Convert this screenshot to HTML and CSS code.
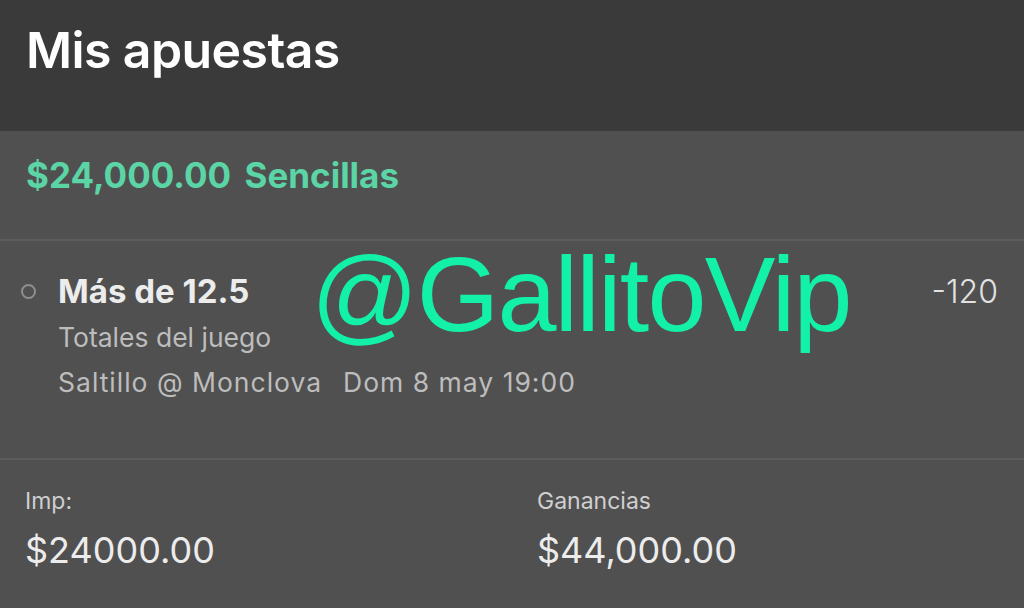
FILE: index.html
```html
<!DOCTYPE html>
<html lang="es">
<head>
<meta charset="utf-8">
<title>Mis apuestas</title>
<link rel="stylesheet" href="styles.css">
</head>
<body>
  <header class="topbar">
    <h1 class="title">Mis apuestas</h1>
  </header>
  <main class="bet">
    <section class="bet-head">
      <span class="bet-sum">$24,000.00 Sencillas</span>
    </section>
    <section class="selection">
      <span class="dot"></span>
      <div class="sel-body">
        <div class="sel-row">
          <span class="sel-name">Más de 12.5</span>
          <span class="sel-odds">-120</span>
        </div>
        <div class="sel-market">Totales del juego</div>
        <div class="sel-event"><span>Saltillo @ Monclova</span><span>Dom 8 may 19:00</span></div>
      </div>
      <div class="tag">@GallitoVip</div>
    </section>
    <section class="totals">
      <div class="total">
        <div class="total-label">Imp:</div>
        <div class="total-value">$24000.00</div>
      </div>
      <div class="total">
        <div class="total-label">Ganancias</div>
        <div class="total-value">$44,000.00</div>
      </div>
    </section>
  </main>
</body>
</html>
```
FILE: styles.css
```css
* { box-sizing: border-box; }
html, body { margin: 0; padding: 0; }
body {
  width: 1024px;
  height: 608px;
  overflow: hidden;
  background: #505050;
  font-family: Inter, "Noto Sans", sans-serif;
  color: #e8e8e8;
}

.topbar {
  height: 131px;
  background: #3a3a3a;
  padding: 20px 26px 0;
}
.title {
  margin: 0;
  font-size: 50px;
  font-weight: 600;
  letter-spacing: -0.6px;
  color: #ffffff;
  line-height: 60px;
}

.bet { background: #505050; }

.bet-head {
  height: 110px;
  padding: 22px 26px 0;
  border-bottom: 2px solid #5d5d5d;
}
.bet-sum {
  font-size: 35px;
  font-weight: 700;
  color: #5bd4a6;
  line-height: 44px;
  word-spacing: 5px;
}

.selection {
  position: relative;
  height: 219px;
  display: flex;
  align-items: flex-start;
  padding: 28px 26px 0 21px;
  border-bottom: 2px solid #5d5d5d;
}
.dot {
  width: 15px;
  height: 15px;
  border: 2px solid #8f8f8f;
  border-radius: 50%;
  margin-top: 15px;
  margin-right: 22px;
  flex: none;
}
.sel-body { flex: 1; }
.sel-row {
  display: flex;
  justify-content: space-between;
  align-items: baseline;
}
.sel-name {
  font-size: 33px;
  font-weight: 700;
  color: #ececec;
  line-height: 44px;
}
.sel-odds {
  font-size: 32px;
  font-weight: 300;
  color: #e2e2e2;
}
.sel-market, .sel-event {
  font-size: 26.5px;
  color: #bdbdbd;
  line-height: 45px;
}
.sel-market { margin-top: 2px; }
.sel-event { display: flex; gap: 21px; letter-spacing: 1px; }

.tag {
  position: absolute;
  left: 311px;
  top: 0px;
  font-family: "Liberation Sans", Arial, sans-serif;
  font-size: 106px;
  line-height: 106px;
  color: #13f0a8;
  letter-spacing: -1.8px;
}

.totals {
  display: grid;
  grid-template-columns: 512px 1fr;
  padding: 25px 25px 0;
}
.total-label {
  font-size: 23px;
  color: #cfcfcf;
  line-height: 32px;
}
.total-value {
  font-size: 36px;
  color: #ececec;
  line-height: 66px;
}
```
